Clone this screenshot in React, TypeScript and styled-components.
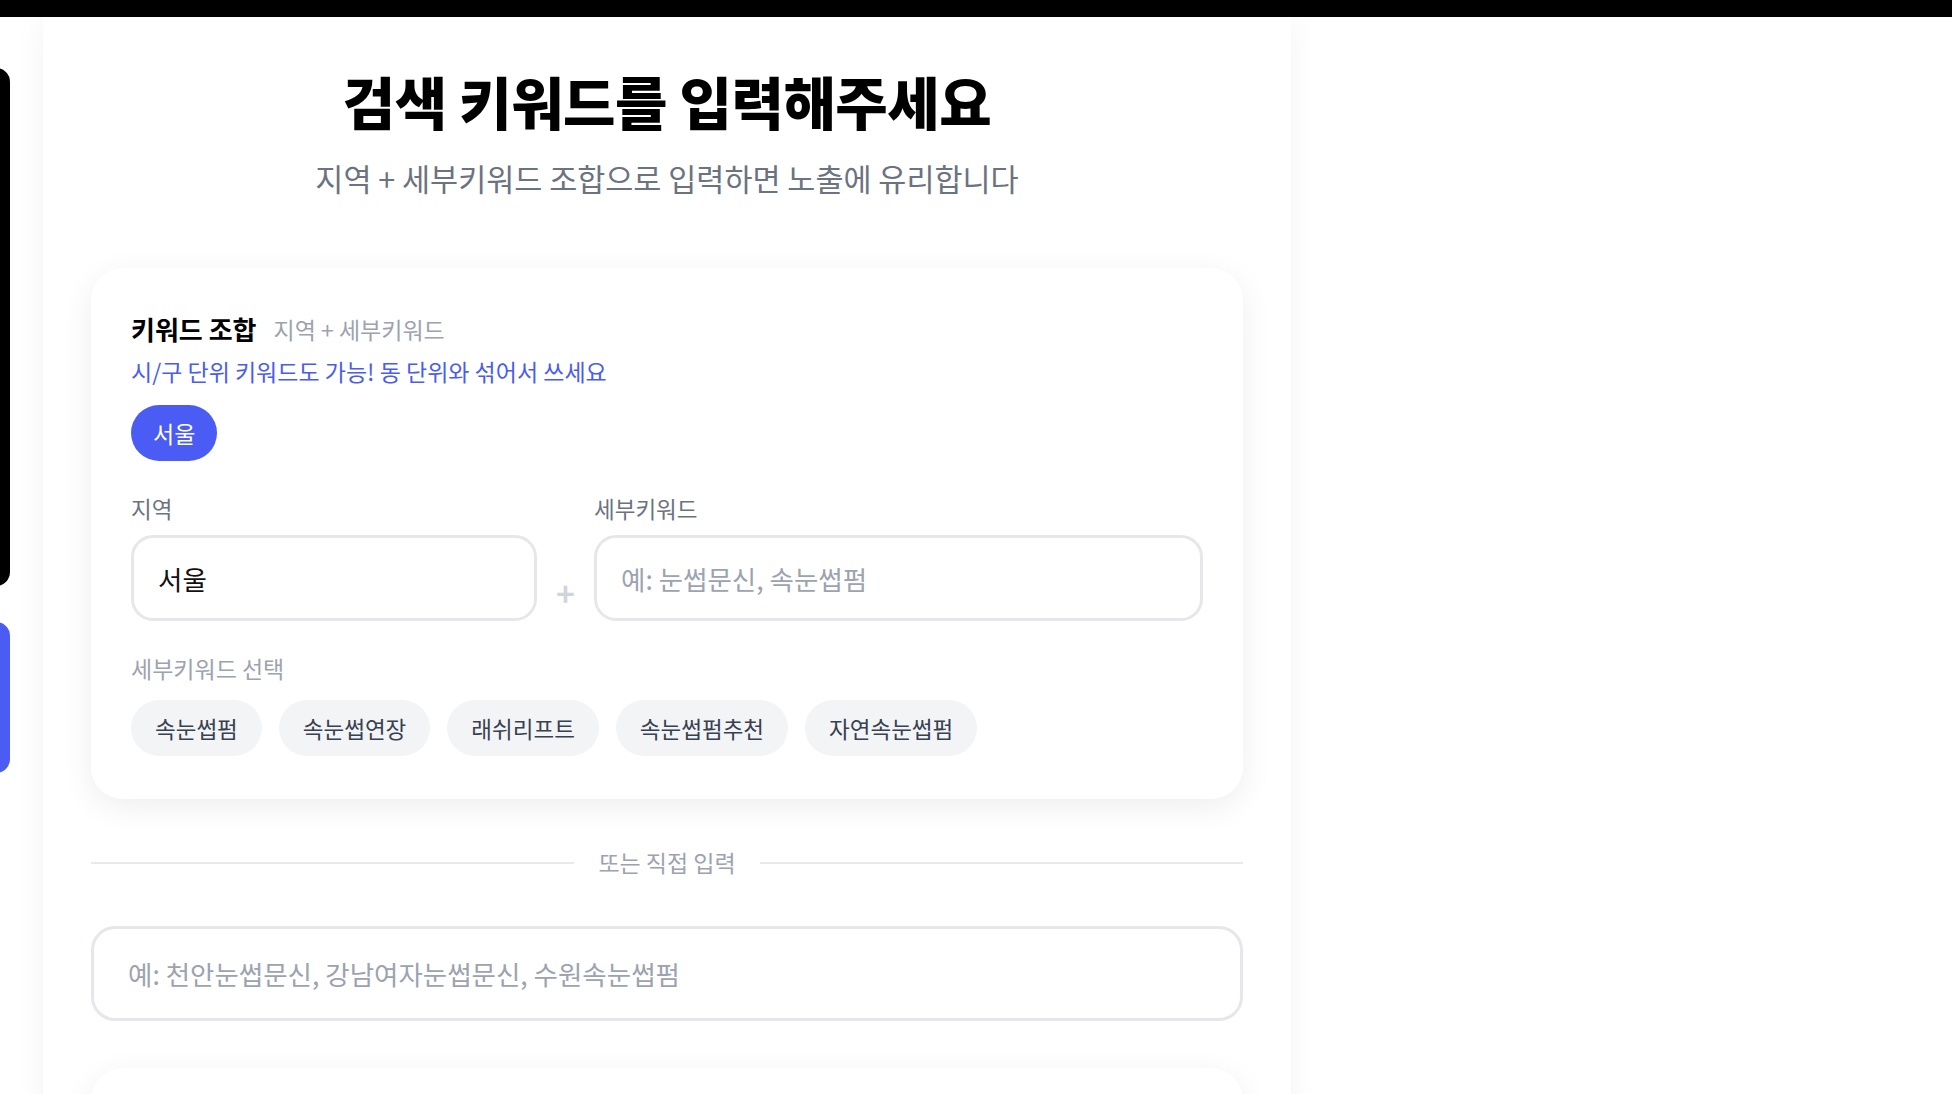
import React from "react"
import styled, { createGlobalStyle } from "styled-components"

const GlobalStyle = createGlobalStyle`
    * {
        box-sizing: border-box;
    }
    body {
        margin: 0;
        background: #fff;
        font-family: "Noto Sans CJK KR", "Noto Sans", sans-serif;
        color: #111;
    }
`

const subKeywords = ["속눈썹펌", "속눈썹연장", "래쉬리프트", "속눈썹펌추천", "자연속눈썹펌"]

const App = () => {
    return (
        <>
            <GlobalStyle />
            <STopBar />
            <SPage>
                <SSideTab $color="#000" $top={51} $height={518} />
                <SSideTab $color="#4a5cf4" $top={605} $height={151} />

                <SPanel>
                    <SHeader>
                        <STitle>검색 키워드를 입력해주세요</STitle>
                        <SSubTitle>지역 + 세부키워드 조합으로 입력하면 노출에 유리합니다</SSubTitle>
                    </SHeader>

                    <SCard>
                        <SCardHead>
                            <SCardTitle>키워드 조합</SCardTitle>
                            <SCardHint>지역 + 세부키워드</SCardHint>
                        </SCardHead>
                        <STip>시/구 단위 키워드도 가능! 동 단위와 섞어서 쓰세요</STip>

                        <SRegionPill>서울</SRegionPill>

                        <SComboRow>
                            <SField>
                                <SLabel>지역</SLabel>
                                <SInput defaultValue="서울" />
                            </SField>
                            <SPlus>+</SPlus>
                            <SField>
                                <SLabel>세부키워드</SLabel>
                                <SInput placeholder="예: 눈썹문신, 속눈썹펌" />
                            </SField>
                        </SComboRow>

                        <SChipLabel>세부키워드 선택</SChipLabel>
                        <SChipRow>
                            {subKeywords.map((k) => (
                                <SChip key={k}>{k}</SChip>
                            ))}
                        </SChipRow>
                    </SCard>

                    <SDivider>
                        <span>또는 직접 입력</span>
                    </SDivider>

                    <SDirectInput placeholder="예: 천안눈썹문신, 강남여자눈썹문신, 수원속눈썹펌" />

                    <SNextCard />
                </SPanel>
            </SPage>
        </>
    )
}

export default App

const STopBar = styled.div`
    height: 17px;
    background: #000;
`

const SPage = styled.div`
    position: relative;
    padding-left: 43px;
    overflow: hidden;
`

// 화면 왼쪽에 살짝 걸쳐 보이는 탭
const SSideTab = styled.div<{ $color: string; $top: number; $height: number }>`
    position: absolute;
    left: -20px;
    top: ${(p) => p.$top}px;
    width: 30px;
    height: ${(p) => p.$height}px;
    border-radius: 14px;
    background: ${(p) => p.$color};
    z-index: 2;
`

const SPanel = styled.div`
    width: 1248px;
    min-height: 1077px;
    background: #fff;
    box-shadow: 0 0 28px rgba(0, 0, 0, 0.05);
    padding: 52px 48px 40px;
    display: flex;
    flex-direction: column;
`

const SHeader = styled.div`
    display: flex;
    flex-direction: column;
    align-items: center;
    gap: 28px;
    margin-bottom: 70px;
`

const STitle = styled.h1`
    margin: 0;
    font-size: 57px;
    font-weight: 900;
    line-height: 62px;
    letter-spacing: -0.5px;
    color: #000;
`

const SSubTitle = styled.p`
    margin: 0;
    font-size: 30.5px;
    font-weight: 400;
    line-height: 39px;
    color: #6b7280;
`

const SCard = styled.div`
    background: #fff;
    border-radius: 32px;
    box-shadow: 0 8px 32px rgba(0, 0, 0, 0.07);
    padding: 44px 40px 43px;
    display: flex;
    flex-direction: column;
    align-items: flex-start;
`

const SCardHead = styled.div`
    display: flex;
    align-items: center;
    gap: 17px;
`

const SCardTitle = styled.div`
    font-size: 26px;
    font-weight: 700;
    line-height: 34px;
    color: #000;
`

const SCardHint = styled.div`
    font-size: 23px;
    line-height: 34px;
    color: #9ca3af;
`

const STip = styled.div`
    margin-top: 10px;
    font-size: 23px;
    line-height: 31px;
    color: #4a5cf0;
`

const SRegionPill = styled.div`
    margin-top: 18px;
    height: 56px;
    padding: 0 22px;
    display: flex;
    align-items: center;
    border-radius: 999px;
    background: #4a5cf4;
    color: #fff;
    font-size: 23px;
`

const SComboRow = styled.div`
    align-self: stretch;
    margin-top: 33px;
    display: grid;
    grid-template-columns: 2fr 25px 3fr;
    column-gap: 16px;
    align-items: end;
`

const SField = styled.div`
    display: flex;
    flex-direction: column;
    gap: 12px;
`

const SLabel = styled.div`
    font-size: 22.5px;
    line-height: 29px;
    color: #6b7280;
`

const SInput = styled.input`
    height: 86px;
    width: 100%;
    border: 3px solid #e5e7eb;
    border-radius: 22px;
    padding: 0 24px;
    font-family: inherit;
    font-size: 26.5px;
    color: #111;
    background: #fff;
    outline: none;

    &::placeholder {
        color: #9ca3af;
    }
`

const SPlus = styled.div`
    margin-bottom: 13px;
    text-align: center;
    font-size: 32px;
    font-weight: 700;
    line-height: 32px;
    color: #d1d5db;
`

const SChipLabel = styled.div`
    margin-top: 33px;
    font-size: 23px;
    line-height: 29px;
    color: #9ca3af;
`

const SChipRow = styled.div`
    margin-top: 17px;
    display: flex;
    flex-wrap: wrap;
    gap: 17px;
`

const SChip = styled.div`
    height: 56px;
    padding: 0 24px;
    display: flex;
    align-items: center;
    border-radius: 999px;
    background: #f3f4f6;
    color: #374151;
    font-size: 22.5px;
    cursor: pointer;
`

const SDivider = styled.div`
    margin-top: 49px;
    display: flex;
    align-items: center;
    gap: 24px;
    font-size: 23px;
    line-height: 29px;
    color: #9ca3af;

    &::before,
    &::after {
        content: "";
        flex: 1;
        height: 2px;
        background: #e8e9ec;
    }
`

const SDirectInput = styled.input`
    margin-top: 49px;
    height: 95px;
    width: 100%;
    border: 3px solid #e5e7eb;
    border-radius: 24px;
    padding: 0 34px;
    font-family: inherit;
    font-size: 26.5px;
    color: #111;
    background: #fff;
    outline: none;

    &::placeholder {
        color: #9ca3af;
    }
`

const SNextCard = styled.div`
    margin-top: 47px;
    height: 240px;
    background: #fff;
    border-radius: 32px;
    box-shadow: 0 8px 32px rgba(0, 0, 0, 0.07);
`
